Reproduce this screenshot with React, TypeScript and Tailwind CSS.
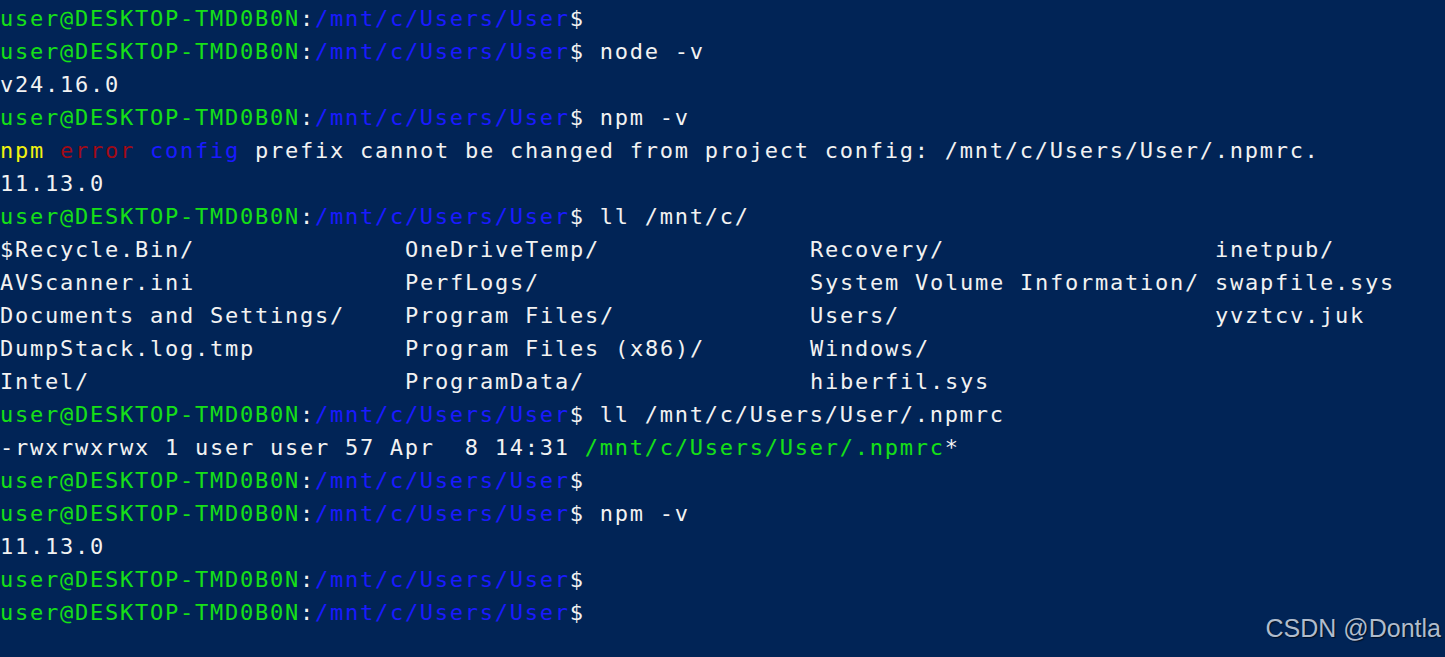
import type { ReactNode } from 'react';

const mono = "font-['DejaVu_Sans_Mono','Liberation_Mono',monospace] text-[22px] tracking-[1.75px]";

function Prompt({ cmd }: { cmd?: string }) {
  return (
    <>
      <span className="text-[#16e016]">user@DESKTOP-TMD0B0N</span>
      <span className="text-[#f2f2f2]">:</span>
      <span className="text-[#1a1aff]">/mnt/c/Users/User</span>
      <span className="text-[#f2f2f2]">$</span>
      {cmd && <span className="text-[#f2f2f2]"> {cmd}</span>}
    </>
  );
}

function Line({ children }: { children: ReactNode }) {
  return <div className="h-[33px] leading-[33px] whitespace-pre text-[#f2f2f2]">{children}</div>;
}

const listing = [
  ['$Recycle.Bin/', 'OneDriveTemp/', 'Recovery/', 'inetpub/'],
  ['AVScanner.ini', 'PerfLogs/', 'System Volume Information/', 'swapfile.sys'],
  ['Documents and Settings/', 'Program Files/', 'Users/', 'yvztcv.juk'],
  ['DumpStack.log.tmp', 'Program Files (x86)/', 'Windows/', ''],
  ['Intel/', 'ProgramData/', 'hiberfil.sys', ''],
];

export default function App() {
  return (
    <div className="relative w-[1445px] h-[657px] overflow-hidden bg-[#012456]">
      <div className={`pt-[2px] ${mono}`}>
        <Line><Prompt /></Line>
        <Line><Prompt cmd="node -v" /></Line>
        <Line>v24.16.0</Line>
        <Line><Prompt cmd="npm -v" /></Line>
        <Line>
          <span className="text-[#f2f20f]">npm</span>{' '}
          <span className="text-[#a00a16]">error</span>{' '}
          <span className="text-[#1a1aff]">config</span>
          {' prefix cannot be changed from project config: /mnt/c/Users/User/.npmrc.'}
        </Line>
        <Line>11.13.0</Line>
        <Line><Prompt cmd="ll /mnt/c/" /></Line>
        {listing.map((row, i) => (
          <div key={i} className="grid grid-cols-[405px_405px_405px_1fr] h-[33px] leading-[33px] whitespace-pre text-[#f2f2f2]">
            {row.map((cell, j) => (
              <span key={j}>{cell}</span>
            ))}
          </div>
        ))}
        <Line><Prompt cmd="ll /mnt/c/Users/User/.npmrc" /></Line>
        <Line>
          {'-rwxrwxrwx 1 user user 57 Apr  8 14:31 '}
          <span className="text-[#16e016]">/mnt/c/Users/User/.npmrc</span>*
        </Line>
        <Line><Prompt /></Line>
        <Line><Prompt cmd="npm -v" /></Line>
        <Line>11.13.0</Line>
        <Line><Prompt /></Line>
        <Line><Prompt /></Line>
      </div>
      <div className="absolute right-[4px] bottom-[10px] font-['Liberation_Sans',Arial,sans-serif] text-[25px] text-[#b0bccc] [text-shadow:1px_1px_1px_rgba(0,0,0,0.6)]">
        CSDN @Dontla
      </div>
    </div>
  );
}
